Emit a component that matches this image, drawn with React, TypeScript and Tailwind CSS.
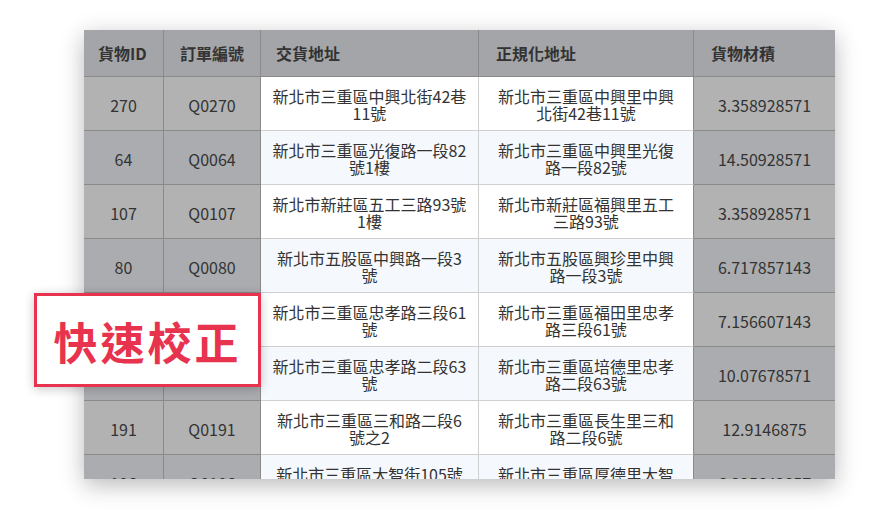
import React from "react";

type Row = {
  id: string;
  order: string;
  addr: string[];
  norm: string[];
  volume: string;
};

const rows: Row[] = [
  { id: "270", order: "Q0270", addr: ["新北市三重區中興北街42巷", "11號"], norm: ["新北市三重區中興里中興", "北街42巷11號"], volume: "3.358928571" },
  { id: "64", order: "Q0064", addr: ["新北市三重區光復路一段82", "號1樓"], norm: ["新北市三重區中興里光復", "路一段82號"], volume: "14.50928571" },
  { id: "107", order: "Q0107", addr: ["新北市新莊區五工三路93號", "1樓"], norm: ["新北市新莊區福興里五工", "三路93號"], volume: "3.358928571" },
  { id: "80", order: "Q0080", addr: ["新北市五股區中興路一段3", "號"], norm: ["新北市五股區興珍里中興", "路一段3號"], volume: "6.717857143" },
  { id: "136", order: "Q0136", addr: ["新北市三重區忠孝路三段61", "號"], norm: ["新北市三重區福田里忠孝", "路三段61號"], volume: "7.156607143" },
  { id: "152", order: "Q0152", addr: ["新北市三重區忠孝路二段63", "號"], norm: ["新北市三重區培德里忠孝", "路二段63號"], volume: "10.07678571" },
  { id: "191", order: "Q0191", addr: ["新北市三重區三和路二段6", "號之2"], norm: ["新北市三重區長生里三和", "路二段6號"], volume: "12.9146875" },
  { id: "106", order: "Q0106", addr: ["新北市三重區大智街105號", "1樓"], norm: ["新北市三重區厚德里大智", "街105號"], volume: "6.225642857" },
];

const font = { fontFamily: '"Noto Sans CJK TC", "Noto Sans", sans-serif' };

const App: React.FC = () => {
  return (
    <div className="w-[870px] h-[510px] bg-white overflow-hidden" style={font}>
      <div className="pt-[30px] pl-[84px]">
        <div className="relative w-[751px]">
          <div className="h-[449px] overflow-hidden shadow-[0_6px_22px_rgba(0,0,0,0.28)] text-[16px] text-[#333]">
            {/* header */}
            <div className="flex h-[47px] bg-[#a4a5a8] border-b border-[#8a8a8a] font-bold">
              <div className="w-[80px] pl-[14px] flex items-center border-r border-[#8a8a8a]">貨物ID</div>
              <div className="w-[97px] pl-[16px] flex items-center border-r border-[#8a8a8a]">訂單編號</div>
              <div className="w-[218px] pl-[15px] flex items-center border-r border-[#8a8a8a]">交貨地址</div>
              <div className="w-[215px] pl-[17px] flex items-center border-r border-[#8a8a8a]">正規化地址</div>
              <div className="flex-1 pl-[17px] flex items-center">貨物材積</div>
            </div>
            {rows.map((r, i) => {
              const even = i % 2 === 1;
              const gray = even ? "bg-[#aaacaf]" : "bg-[#b2b2b2]";
              const light = even ? "bg-[#f5f8fd]" : "bg-white";
              return (
                <div key={r.id} className="flex h-[54px] leading-[17px]">
                  <div className={`w-[80px] ${gray} border-r border-b border-[#8a8a8a] flex items-center justify-center pt-[4px]`}>
                    {r.id}
                  </div>
                  <div className={`w-[97px] ${gray} border-r border-b border-[#8a8a8a] flex items-center justify-center pt-[4px]`}>
                    {r.order}
                  </div>
                  <div className={`w-[218px] ${light} border-r border-b border-[#cfcfcf] flex flex-col items-center justify-center text-center pt-[2px]`}>
                    <span>{r.addr[0]}</span>
                    <span>{r.addr[1]}</span>
                  </div>
                  <div className={`w-[215px] ${light} border-r border-b border-r-[#8a8a8a] border-b-[#cfcfcf] flex flex-col items-center justify-center text-center pt-[2px]`}>
                    <span>{r.norm[0]}</span>
                    <span>{r.norm[1]}</span>
                  </div>
                  <div className={`flex-1 ${gray} border-b border-[#8a8a8a] flex items-center justify-center pt-[4px]`}>
                    {r.volume}
                  </div>
                </div>
              );
            })}
          </div>

          {/* overlay label */}
          <div className="absolute left-[-50px] top-[263px] w-[227px] h-[94px] bg-white border-[3px] border-[#e8334f] shadow-[0_2px_10px_rgba(0,0,0,0.22)] flex items-center justify-center">
            <span className="text-[44px] font-bold tracking-[3px] text-[#e8334f] leading-none mt-[2px]">
              快速校正
            </span>
          </div>
        </div>
      </div>
    </div>
  );
};

export default App;
